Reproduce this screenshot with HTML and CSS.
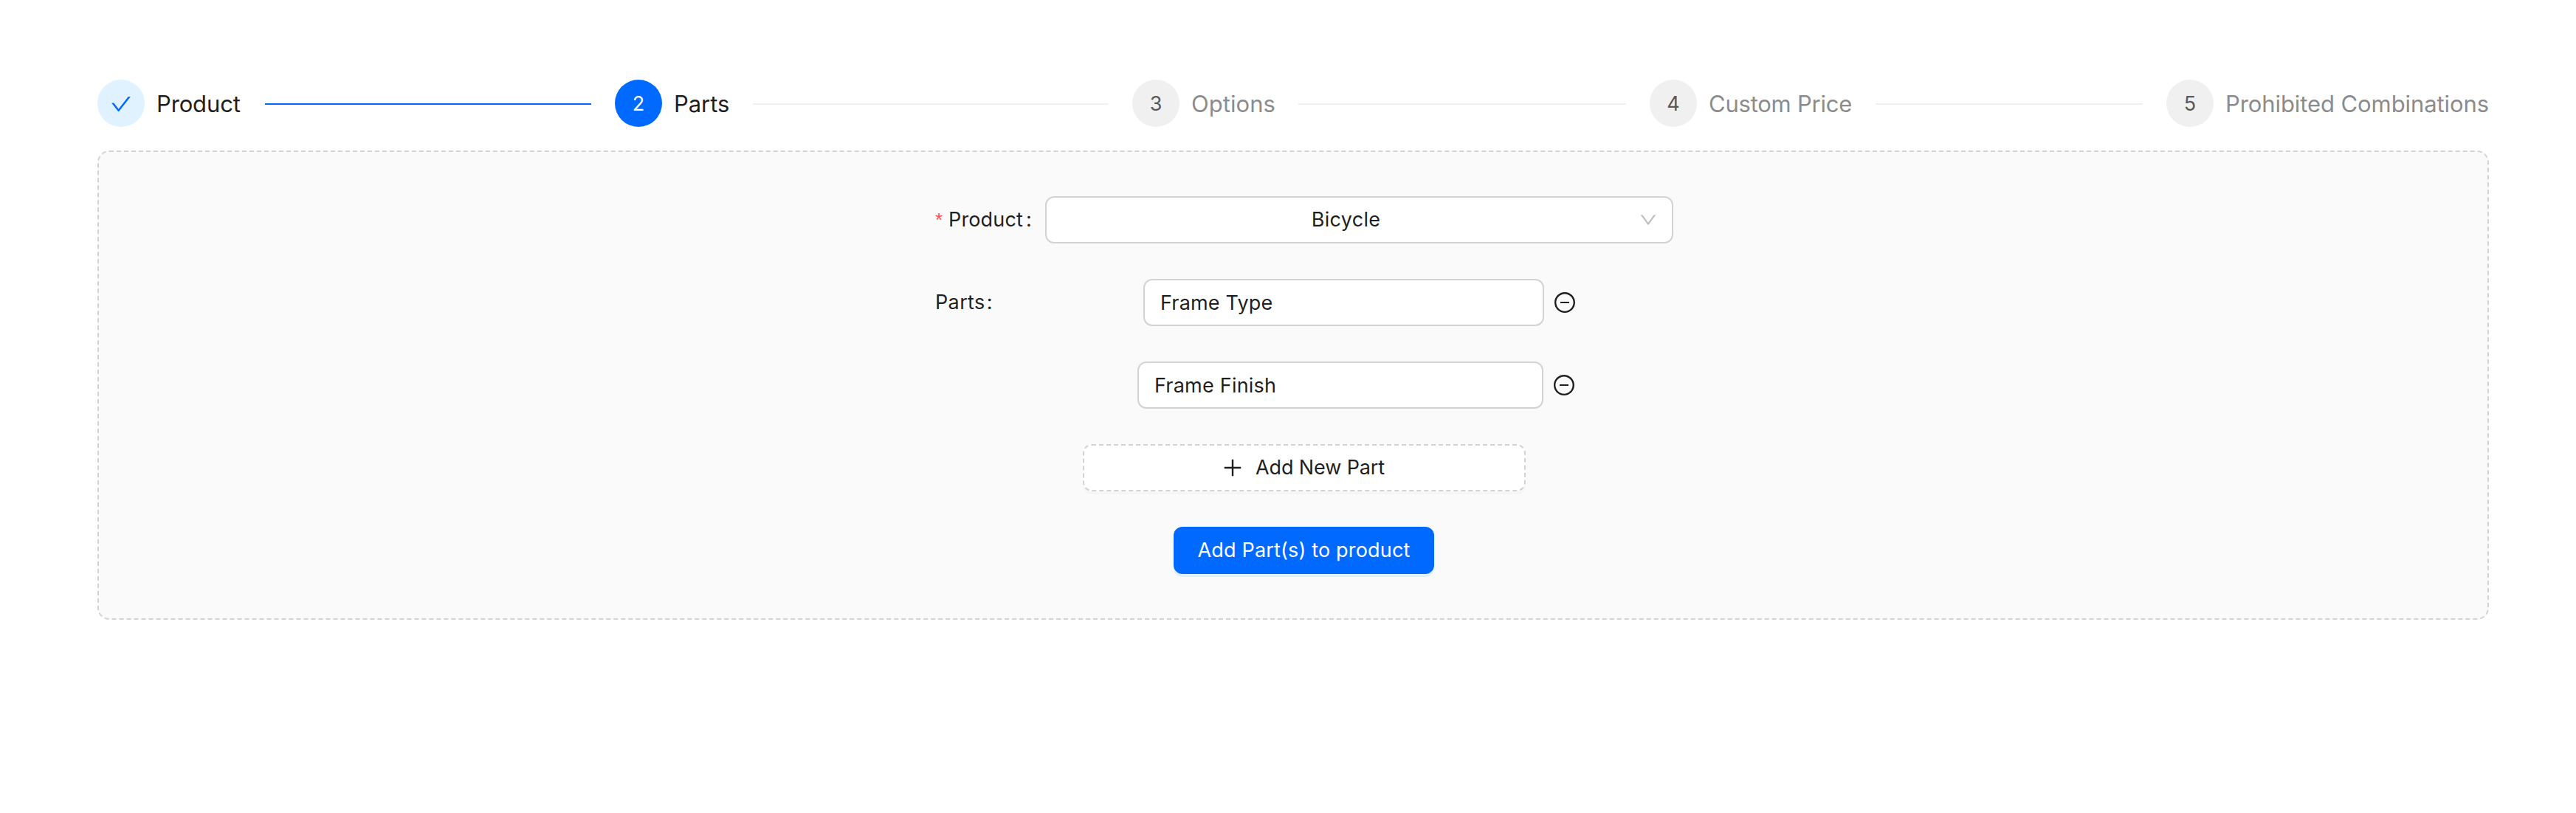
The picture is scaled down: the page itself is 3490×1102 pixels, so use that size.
FILE: index.html
```html
<!DOCTYPE html>
<html lang="en">
<head>
<meta charset="utf-8">
<title>Parts</title>
<link rel="stylesheet" href="styles.css">
</head>
<body>
<main class="page">
  <ol class="steps">
    <li class="step step-done">
      <span class="step-icon"><svg class="icon" viewBox="64 64 896 896"><path d="M912 190h-69.900c-9.800 0-19.100 4.500-25.100 12.200L404.700 724.500 207 474a32 32 0 0 0-25.100-12.200H112c-6.700 0-10.400 7.700-6.300 12.900l273.900 347c12.800 16.200 37.400 16.200 50.300 0l488.400-618.900c4.100-5.100.4-12.800-6.300-12.800z"/></svg></span>
      <span class="step-title title-product">Product</span>
      <span class="step-line"></span>
    </li>
    <li class="step step-active">
      <span class="step-icon">2</span>
      <span class="step-title title-parts">Parts</span>
      <span class="step-line"></span>
    </li>
    <li class="step">
      <span class="step-icon">3</span>
      <span class="step-title title-options">Options</span>
      <span class="step-line"></span>
    </li>
    <li class="step">
      <span class="step-icon">4</span>
      <span class="step-title title-price">Custom Price</span>
      <span class="step-line"></span>
    </li>
    <li class="step">
      <span class="step-icon">5</span>
      <span class="step-title title-combos">Prohibited Combinations</span>
    </li>
  </ol>

  <section class="panel">
    <form class="form">
      <div class="row">
        <label class="label label-select"><span class="required">*</span><span class="label-product">Product</span><span class="colon">:</span></label>
        <div class="field select">
          <span class="select-value">Bicycle</span>
          <svg class="icon-arrow" viewBox="64 64 896 896"><path d="M884 256h-75c-5.100 0-9.900 2.500-12.900 6.600L512 654.200 227.900 262.600c-3-4.100-7.800-6.600-12.900-6.600h-75c-6.500 0-10.300 7.400-6.500 12.700l352.600 486.100c12.800 17.600 39 17.600 51.700 0l352.600-486.100c3.900-5.300.1-12.700-6.400-12.700z"/></svg>
        </div>
      </div>
      <div class="row">
        <label class="label label-list"><span class="label-parts">Parts</span><span class="colon">:</span></label>
        <input class="field input input-type" type="text" value="Frame Type">
        <svg class="icon remove" viewBox="64 64 896 896"><path d="M696 480H328c-4.400 0-8 3.600-8 8v48c0 4.400 3.600 8 8 8h368c4.400 0 8-3.600 8-8v-48c0-4.400-3.600-8-8-8z"/><path d="M512 64C264.600 64 64 264.600 64 512s200.600 448 448 448 448-200.600 448-448S759.400 64 512 64zm0 820c-205.400 0-372-166.600-372-372s166.600-372 372-372 372 166.600 372 372-166.600 372-372 372z"/></svg>
      </div>
      <div class="row row-indent">
        <input class="field input input-finish" type="text" value="Frame Finish">
        <svg class="icon remove" viewBox="64 64 896 896"><path d="M696 480H328c-4.400 0-8 3.600-8 8v48c0 4.400 3.600 8 8 8h368c4.400 0 8-3.600 8-8v-48c0-4.400-3.600-8-8-8z"/><path d="M512 64C264.600 64 64 264.600 64 512s200.600 448 448 448 448-200.600 448-448S759.400 64 512 64zm0 820c-205.400 0-372-166.600-372-372s166.600-372 372-372 372 166.600 372 372-166.600 372-372 372z"/></svg>
      </div>
      <div class="row row-center">
        <button class="button button-dashed" type="button">
          <svg class="icon" viewBox="64 64 896 896"><path d="M482 152h60q8 0 8 8v704q0 8-8 8h-60q-8 0-8-8V160q0-8 8-8z"/><path d="M160 474h704q8 0 8 8v60q0 8-8 8H160q-8 0-8-8v-60q0-8 8-8z"/></svg>
          <span>Add New Part</span>
        </button>
      </div>
      <div class="row row-center">
        <button class="button button-primary" type="button">Add Part(s) to product</button>
      </div>
    </form>
  </section>
</main>
</body>
</html>
```
FILE: styles.css
```css
* {
  box-sizing: border-box;
}

body {
  margin: 0;
  background: #fff;
  color: #1f1f1f;
  font: 27px/44px Inter, "Liberation Sans", sans-serif;
}

.page {
  padding: 108px 118px 0 132px;
}

.steps {
  display: grid;
  grid-template-columns: 701px 701px 701px 700px 1fr;
  height: 64px;
  margin: 0 0 32px;
  padding: 0;
  list-style: none;
}

.step {
  display: flex;
  align-items: center;
  height: 64px;
  color: #8c8c8c;
}

.step-icon {
  display: flex;
  flex: none;
  align-items: center;
  justify-content: center;
  width: 64px;
  height: 64px;
  margin-right: 16px;
  padding-top: 2px;
  border-radius: 50%;
  background: #f0f0f0;
  color: #595959;
}

.step-title {
  flex: none;
  padding-top: 2px;
  font-size: 31px;
  line-height: 44px;
  white-space: nowrap;
}

.step-line {
  flex: 1;
  height: 2px;
  margin: 2px 32px 0;
  background: #f0f0f0;
}

.title-product {
  width: 115px;
  letter-spacing: -0.144px;
}

.title-parts {
  width: 75px;
  letter-spacing: -0.05px;
}

.title-options {
  width: 113px;
  letter-spacing: 0.044px;
}

.title-price {
  width: 194px;
  letter-spacing: -0.228px;
}

.title-combos {
  letter-spacing: -0.088px;
}

.step-done,
.step-active {
  color: #1f1f1f;
}

.step-done .step-icon {
  background: #e0f1ff;
  color: #0069ff;
}

.step-done .step-line {
  background: #0069ff;
}

.step-active .step-icon {
  background: #0069ff;
  color: #fff;
}

.icon {
  flex: none;
  width: 28px;
  height: 28px;
  fill: currentColor;
}

.panel {
  height: 636px;
  padding: 60px 0;
  border: 2px dashed #d3d3d3;
  border-radius: 16px;
  background: #fafafa;
}

.form {
  display: flex;
  flex-direction: column;
  gap: 48px;
  width: 1000px;
  margin-left: 1133px;
}

.row {
  display: flex;
  align-items: center;
  height: 64px;
}

.row-indent {
  padding-left: 274px;
}

.row-center {
  justify-content: center;
}

.label {
  display: flex;
  flex: none;
}

.label-select {
  width: 149px;
}

.label-list {
  width: 282px;
}

.label-product {
  margin-right: 1px;
  letter-spacing: 0.155px;
}

.label-parts {
  margin-right: -1px;
  letter-spacing: 0.36px;
}

.required {
  width: 18px;
  color: #ff4d4f;
  font: 26px/44px "Liberation Sans", sans-serif;
}

.colon {
  margin-left: 3px;
}

.field {
  height: 64px;
  border: 2px solid #d3d3d3;
  border-radius: 12px;
  background: #fff;
}

.select {
  display: flex;
  flex: none;
  align-items: center;
  width: 851px;
  padding: 0 20px 0 22px;
}

.select-value {
  flex: 1;
  padding-right: 14px;
  letter-spacing: 0.298px;
  text-align: center;
}

.icon-arrow {
  width: 24px;
  height: 24px;
  fill: #bfbfbf;
}

.input {
  flex: none;
  padding: 0 21px;
  color: inherit;
  font: inherit;
  outline: 0;
}

.input-type {
  width: 543px;
  letter-spacing: 0.177px;
}

.input-finish {
  width: 550px;
  letter-spacing: 0.211px;
}

.remove {
  margin-left: 14px;
}

.button {
  display: flex;
  align-items: center;
  justify-content: center;
  height: 64px;
  padding: 0;
  border-radius: 12px;
  font: inherit;
}

.button-dashed {
  gap: 17px;
  width: 600px;
  padding-right: 2px;
  border: 2px dashed #d3d3d3;
  background: #fff;
  box-shadow: 0 4px 0 rgba(0, 0, 0, 0.02);
  color: #1f1f1f;
  letter-spacing: -0.115px;
}

.button-primary {
  width: 353px;
  margin-right: 1px;
  border: 0;
  background: #0069ff;
  box-shadow: 0 4px 0 rgba(5, 145, 255, 0.1);
  color: #fff;
  letter-spacing: 0.173px;
}
```
